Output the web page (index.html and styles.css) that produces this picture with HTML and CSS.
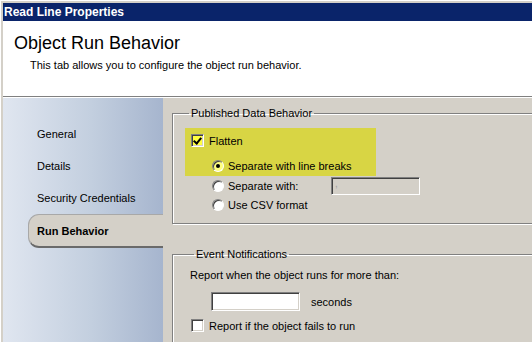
FILE: index.html
```html
<!DOCTYPE html>
<html lang="en">
<head>
  <meta charset="UTF-8" />
  <title>Read Line Properties</title>
  <link rel="stylesheet" href="styles.css">
</head>
<body>
  <div class="window">
    <div class="title-bar">Read Line Properties</div>

    <div class="page-header">
      <h1>Object Run Behavior</h1>
      <p>This tab allows you to configure the object run behavior.</p>
    </div>

    <div class="page-body">
      <!-- Tabs -->
      <nav class="tab-list">
        <div class="tab">General</div>
        <div class="tab">Details</div>
        <div class="tab">Security Credentials</div>
        <div class="tab active">Run Behavior</div>
      </nav>

      <div class="tab-content">
        <fieldset class="group">
          <legend>Published Data Behavior</legend>

          <div class="highlight">
            <div class="row">
              <span class="check checked"></span>
              <span>Flatten</span>
            </div>
            <div class="row indent">
              <span class="radio selected"></span>
              <span>Separate with line breaks</span>
            </div>
          </div>

          <div class="row indent option tall">
            <span class="radio"></span>
            <span class="option-label">Separate with:</span>
            <span class="text-box disabled">,</span>
          </div>
          <div class="row indent option">
            <span class="radio"></span>
            <span>Use CSV format</span>
          </div>
        </fieldset>

        <fieldset class="group events">
          <legend>Event Notifications</legend>
          <div class="line">Report when the object runs for more than:</div>
          <div class="row seconds-row">
            <span class="text-box"></span>
            <span>seconds</span>
          </div>
          <div class="row fail-row">
            <span class="check"></span>
            <span>Report if the object fails to run</span>
          </div>
        </fieldset>
      </div>
    </div>
  </div>
</body>
</html>
```

FILE: styles.css
```css
html, body {
  margin: 0;
  padding: 0;
}

body {
  width: 532px;
  height: 342px;
  overflow: hidden;
  font-family: "Liberation Sans", Arial, sans-serif;
  font-size: 11px;
  color: #000;
  background-color: #d4d0c8;
}

.window {
  height: 342px;
  padding: 3px 0 0 3px;
  box-sizing: border-box;
  background-color: #d4d0c8;
  box-shadow: inset 1px 1px 0 #fff;
  display: flex;
  flex-direction: column;
}

.title-bar {
  height: 18px;
  line-height: 18px;
  padding-left: 1px;
  background-color: #0a246a;
  color: #fff;
  font-weight: bold;
  font-size: 12px;
}

.page-header {
  height: 76px;
  flex-shrink: 0;
  background-color: #fff;
  border-bottom: 1px solid #808080;
  box-sizing: border-box;
  padding: 12px 0 0 11px;
}

.page-header h1 {
  margin: 0;
  font-size: 18px;
  font-weight: normal;
  line-height: 20px;
}

.page-header p {
  margin: 6px 0 0 16px;
  line-height: 13px;
}

.page-body {
  flex: 1;
  display: flex;
  border-top: 1px solid #fff;
  min-height: 0;
}

/* left tab strip */
.tab-list {
  width: 160px;
  flex-shrink: 0;
  padding-top: 20px;
  background: linear-gradient(to right, #e0e6f0, #c3cfdf 55%, #a6b5ce);
}

.tab {
  height: 32px;
  line-height: 32px;
  padding-left: 34px;
}

.tab.active {
  height: 34px;
  line-height: 33px;
  margin-left: 25px;
  padding-left: 8px;
  font-weight: bold;
  background-color: #d4d0c8;
  border: 1px solid #a8a8a8;
  border-right: none;
  border-bottom: 2px solid #6a6a6a;
  border-radius: 11px 0 0 11px;
  box-sizing: border-box;
}

/* right side */
.tab-content {
  flex: 1;
  overflow: hidden;
  padding: 9px 0 0 9px;
}

.group {
  margin: 0 -10px 0 0;
  padding: 8px 0 12px 12px;
  border: 1px solid #808080;
  box-shadow: inset 1px 1px 0 #fff, 1px 1px 0 #fff;
  min-width: 0;
}

.group legend {
  padding: 0 2px;
  margin-left: 4px;
  line-height: 13px;
}

.row {
  display: flex;
  align-items: center;
  height: 13px;
}

.highlight {
  width: 191px;
  height: 48px;
  box-sizing: border-box;
  padding: 6px 0 0 6px;
  background-color: #d8d544;
  display: flex;
  flex-direction: column;
  gap: 12px;
}

.highlight .indent {
  padding-left: 21px;
}

.option {
  padding-left: 27px;
  margin-top: 3px;
}

.option.tall {
  height: 18px;
  margin-top: 1px;
}

.option-label {
  width: 103px;
}

.check {
  width: 13px;
  height: 13px;
  box-sizing: border-box;
  margin-right: 5px;
  background-color: #fff;
  border: 1px solid;
  border-color: #808080 #fff #fff #808080;
  box-shadow: inset 1px 1px 0 #404040, inset -1px -1px 0 #d4d0c8;
  position: relative;
  flex-shrink: 0;
}

.check.checked {
  background-color: #ffff40;
}

.check.checked::after {
  content: "";
  position: absolute;
  left: 3px;
  top: 1px;
  width: 3px;
  height: 6px;
  border: solid #000;
  border-width: 0 2px 2px 0;
  transform: rotate(40deg);
}

.radio {
  width: 12px;
  height: 12px;
  box-sizing: border-box;
  margin-right: 4px;
  border-radius: 50%;
  background-color: #fff;
  border: 1px solid;
  border-color: #808080 #fff #fff #808080;
  box-shadow: inset 1px 1px 0 #404040;
  position: relative;
  flex-shrink: 0;
}

.radio.selected {
  background-color: #ffff80;
}

.radio.selected::after {
  content: "";
  position: absolute;
  left: 3px;
  top: 3px;
  width: 4px;
  height: 4px;
  border-radius: 50%;
  background-color: #000;
}

.text-box {
  width: 89px;
  height: 19px;
  box-sizing: border-box;
  background-color: #fff;
  border: 1px solid;
  border-color: #808080 #fff #fff #808080;
  box-shadow: inset 1px 1px 0 #404040, inset -1px -1px 0 #d4d0c8;
  flex-shrink: 0;
}

.text-box.disabled {
  height: 18px;
  background-color: #d4d0c8;
  color: #a0a0a0;
  padding-left: 3px;
  line-height: 12px;
  font-size: 10px;
}

.events {
  margin-top: 24px;
  padding: 8px 0 40px 17px;
}

.line {
  line-height: 13px;
}

.seconds-row {
  height: 19px;
  margin: 10px 0 0 21px;
  gap: 11px;
}

.fail-row {
  margin: 8px 0 0 1px;
}
```
